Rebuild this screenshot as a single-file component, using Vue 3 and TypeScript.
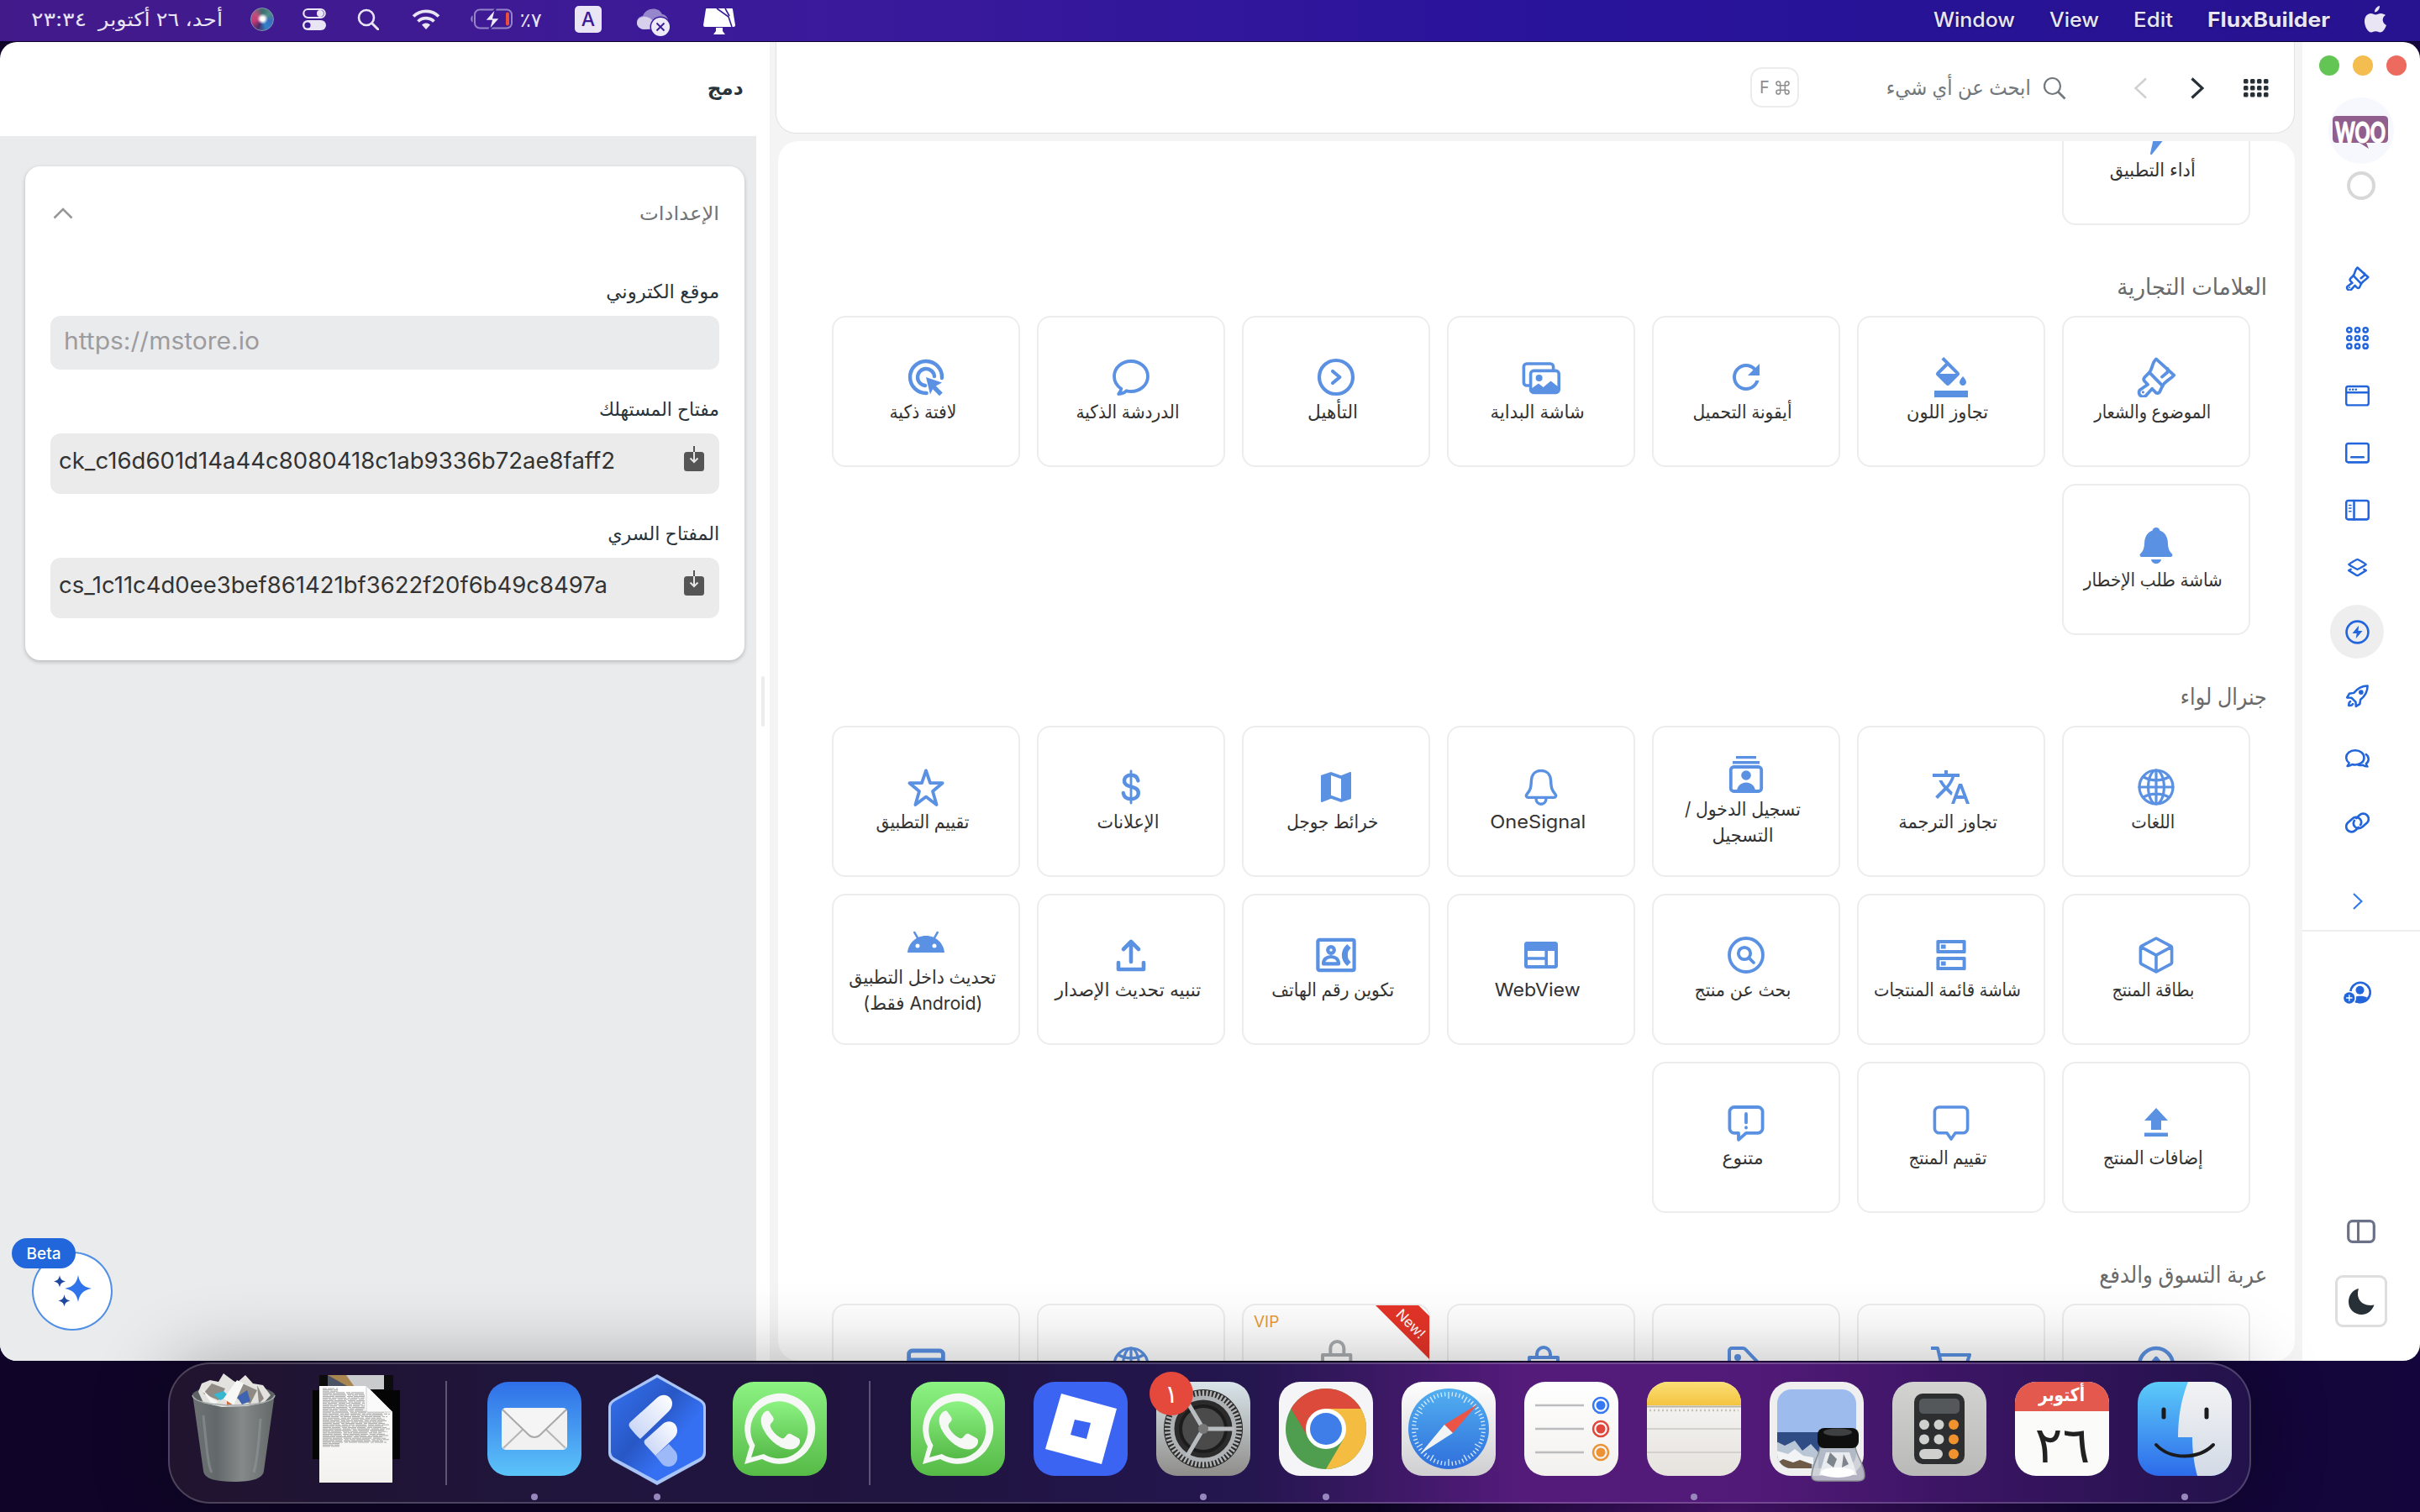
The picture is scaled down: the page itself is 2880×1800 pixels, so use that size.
<script setup lang="ts">
interface Label { text: string; w: number }
interface Tile { icon: string; lines: Label[]; vip?: boolean }
interface Section { title: Label; tiles: Tile[] }

/* Condenses or widens a single line of text to the given width in pixels. */
const vFit = {
  mounted(el: HTMLElement, binding: { value: number }) {
    const natural = el.getBoundingClientRect().width
    if (!natural) return
    const rtl = getComputedStyle(el).direction === 'rtl'
    el.style.transformOrigin = rtl ? '100% 50%' : '0 50%'
    el.style.transform = `scaleX(${binding.value / natural})`
    el.style[rtl ? 'marginLeft' : 'marginRight'] = `${binding.value - natural}px`
  },
}

const t = (icon: string, text: string, w: number, text2?: string, w2?: number): Tile => ({
  icon,
  lines: text2 ? [{ text, w }, { text: text2, w: w2 as number }] : [{ text, w }],
})

const s = (inner: string, width = 2) =>
  `<g fill="none" stroke="currentColor" stroke-width="${width}" stroke-linejoin="round" stroke-linecap="round">${inner}</g>`
const f = (d: string) => `<path fill="currentColor" fill-rule="evenodd" d="${d}"/>`

const brush = (w: number) =>
  s('<path d="M8 9.2C10 6.8 9.4 3.4 12 1.2L22.6 10.8C20.8 13.2 17.3 14.2 15.8 17.2Z"/><path d="M8 9.2 5.2 12c-.8.9-.8 1.6-.1 2.4L7 16.4 2.3 19.600a2.500 2.500 0 0 0 3.500 3.500L9.600 18.900l2 2.100c.9.8 1.700.7 2.400-.1l1.800-3.700M15.500 11.800 18.800 9v-2"/>', w) +
  '<circle cx="4.2" cy="20.900" r=".8" fill="currentColor"/>'
const globe = s('<circle cx="12" cy="12" r="10"/><ellipse cx="12" cy="12" rx="4.700" ry="10"/><path d="M2 12h20M12 2v20M4.500 6c4.500 2.600 10.500 2.600 15 0M4.500 18c4.500-2.600 10.500-2.600 15 0"/>', 1.6)

const icons: Record<string, string> = {
  boltTail: f('M11.800 8H21.800L9.300 23.600l-.9-.4z'),
  brush: brush(1.9),
  fill: f('M16.56 8.94L7.62 0 6.21 1.41l2.38 2.38-5.15 5.15c-.59.59-.59 1.54 0 2.12l5.5 5.5c.29.29.68.44 1.06.44s.77-.15 1.06-.44l5.5-5.5c.59-.58.59-1.53 0-2.12zM5.21 10L10 5.21 14.79 10H5.21zM19 11.500s-2 2.170-2 3.500c0 1.100.9 2 2 2s2-.9 2-2c0-1.330-2-3.500-2-3.500zM2 20h20v4H2z'),
  refresh: f('M17.65 6.35C16.2 4.9 14.21 4 12 4c-4.42 0-7.99 3.580-7.99 8s3.570 8 7.99 8c3.730 0 6.840-2.550 7.730-6h-2.080c-.82 2.330-3.040 4-5.650 4-3.310 0-6-2.690-6-6s2.690-6 6-6c1.660 0 3.140.69 4.220 1.780L13 11h7V4l-2.350 2.350z'),
  images: s('<path d="M4.800 17H3.500A1.800 1.800 0 0 1 1.700 15.200V5.800C1.700 4.800 2.500 4 3.500 4h14a1.800 1.800 0 0 1 1.800 1.800V8"/><rect x="5.800" y="8.200" width="16.800" height="13" rx="1.800"/>', 1.8) + '<circle cx="10.800" cy="12.500" r="2" fill="currentColor"/>' + f('M6 19l4.500-3.200 2.800 2.200 4.500-3.700 4.700 3.700v3.200H6z'),
  next: s('<circle cx="12" cy="12" r="10"/><path d="M10 8.500l4.200 3.500-4.200 3.500"/>', 2.1),
  chat: s('<path d="M12 2.500c-5.600 0-10 4-10 9 0 3.200 1.600 5.700 4.200 7.400-.2 1.200-.8 2.200-1.600 3.100 2 0 3.500-.7 4.700-1.900.9.3 1.800.4 2.700.4 5.600 0 10-4 10-9s-4.400-9-10-9z"/>', 1.9),
  target: s('<path d="M21.500 12.500A9.500 9.500 0 1 0 12.300 21.500"/><path d="M17 11.500A5 5 0 1 0 11.500 17"/>', 2.2) + f('M12 12l9.500 3.300-3.600 1.900 4 4-1.900 1.900-4-4-1.500 3.200z'),
  bellFill: f('M12 1.500c1.200 0 2 .7 2.200 1.700 2.800 1 4.500 3.600 4.700 6.600.2 4 .6 5.600 2.400 7.200.8.8.3 2-.7 2H3.400c-1 0-1.500-1.200-.7-2 1.800-1.600 2.200-3.200 2.400-7.200.2-3 1.900-5.600 4.700-6.600.2-1 1-1.700 2.200-1.700zM9 20.500h6c-.2 1.400-1.400 2.500-3 2.500s-2.800-1.100-3-2.500z'),
  globe,
  users: f('M6 1h12v1.600H6zM4 4h16v1.700H4z') + s('<rect x="2.900" y="7.500" width="18.200" height="14.500" rx="1.800"/>', 1.9) + '<circle cx="12" cy="12.500" r="2.900" fill="currentColor"/>' + f('M6.500 21.500c.5-3 2.800-4.700 5.500-4.700s5 1.700 5.500 4.700z'),
  translate: f('M12.87 15.07l-2.54-2.51.03-.03c1.74-1.940 2.980-4.170 3.710-6.530H17V4h-7V2H8v2H1v1.990h11.170C11.500 7.920 10.440 9.750 9 11.350 8.070 10.320 7.300 9.190 6.690 8h-2c.73 1.630 1.730 3.170 2.980 4.560l-5.090 5.020L4 19l5-5 3.110 3.110.76-2.040zM18.500 10h-2L12 22h2l1.120-3h4.750L21 22h2l-4.500-12zm-2.620 7l1.620-4.330L19.120 17h-3.240z'),
  bell: s('<path d="M12 2.200c-3.500 0-5.600 2.500-5.800 6-.2 4.500-.7 5.800-2.700 8.100-.6.800-.2 1.900.8 1.900h15.400c1 0 1.400-1.100.8-1.900-2-2.300-2.500-3.600-2.700-8.100-.2-3.500-2.300-6-5.800-6zM9 18.700c0 2 1.300 3.400 3 3.400s3-1.400 3-3.400"/>', 1.7),
  map: f('M20.500 3l-.16.03L15 5.100 9 3 3.360 4.900c-.21.07-.36.25-.36.48V20.500c0 .28.22.5.5.5l.16-.03L9 18.900l6 2.100 5.640-1.900c.21-.07.36-.25.36-.48V3.500c0-.28-.22-.5-.5-.5zM15 19l-6-2.110V5l6 2.110V19z'),
  dollar: s('<path d="M16.200 8.200C15.800 6 14.200 4.900 12 4.900c-2.400 0-4 1.300-4 3.400 0 4.700 8.400 2.300 8.400 7.200 0 2.200-1.800 3.600-4.400 3.600-2.600 0-4.300-1.300-4.600-3.600"/>', 2.2) + s('<path d="M12 2.500v19"/>', 1.400),
  star: s('<path d="M12 2.200l2.500 7.400h7.300l-5.800 4.900 2.300 8-6.300-4.700-6.300 4.700 2.300-8-5.800-4.900h7.300z"/>', 1.9),
  cube: s('<path d="M12 2l8.800 4.700a1 1 0 0 1 .5.9v8.800a1 1 0 0 1-.5.9L12 22l-8.800-4.700a1 1 0 0 1-.5-.9V7.600a1 1 0 0 1 .5-.9zM3 7.200l9 4.900 9-4.900M12 12.100V22"/>', 1.8),
  rows: f('M4 3h16a.8.8 0 0 1 .8.800v6.400a.8.8 0 0 1-.8.8H4a.8.8 0 0 1-.8-.8V3.800A.8.8 0 0 1 4 3zm1.200 2v4h13.600V5zM4 13h16a.8.8 0 0 1 .8.800v6.400a.8.8 0 0 1-.8.800H4a.8.8 0 0 1-.8-.8v-6.400A.8.8 0 0 1 4 13zm1.200 2v4h13.600v-4zM6 5.700h2.800v2.600H6zM6 15.700h2.800v2.600H6z'),
  find: s('<circle cx="12" cy="12" r="10"/><circle cx="11" cy="11" r="3.600"/><path d="M13.700 13.700l2.800 2.800"/>', 1.9),
  web: f('M3.500 4h17c.8 0 1.500.7 1.500 1.500v13c0 .8-.7 1.500-1.500 1.500h-17c-.8 0-1.500-.7-1.500-1.500v-13C2 4.700 2.700 4 3.500 4zM4 9.500v3.600h10.200V9.500zM4 14.900V18h10.200v-3.100zM16 9.500V18h4V9.500z'),
  contact: s('<rect x="1.200" y="2.900" width="21.600" height="18.200" rx="1"/><circle cx="9" cy="9" r="1.900"/><path d="M4.500 17.200c0-2.700 2-4.200 4.500-4.200s4.500 1.500 4.500 4.200z"/>', 2.1) + f('M18.600 5.500l2.200 2.300-1.500 1.800c-.5 1.600-.5 3.200 0 4.800l1.500 1.800-2.200 2.300c-4.200-3.600-4.200-9.400 0-13z'),
  upload: s('<path d="M12 16V4.500M7.500 8.500L12 4l4.500 4.500M4.500 16.500v4h15v-4"/>', 2.3),
  android: f('M17.600 9.480l1.840-3.180c.16-.31.04-.69-.26-.85-.29-.15-.65-.06-.83.22l-1.880 3.240c-2.860-1.210-6.080-1.210-8.940 0L5.650 5.670c-.19-.29-.58-.38-.87-.2-.28.18-.37.54-.22.83L6.400 9.480C3.300 11.250 1.280 14.440 1 18h22c-.28-3.560-2.300-6.750-5.400-8.520zM7 15.250a1.250 1.250 0 1 1 0-2.500 1.250 1.250 0 0 1 0 2.500zm10 0a1.250 1.250 0 1 1 0-2.500 1.250 1.250 0 0 1 0 2.500z'),
  publish: f('M12 3l7 7.500h-4V16H9v-5.500H5zM5 17.800h14V20H5z'),
  review: s('<path d="M5 2.500h14A2.800 2.800 0 0 1 21.800 5.300v9.800a2.800 2.800 0 0 1-2.800 2.800h-4.500L12 21.500l-2.500-3.600H5a2.800 2.800 0 0 1-2.800-2.800V5.300A2.800 2.800 0 0 1 5 2.500z"/>', 1.8),
  alert: s('<path d="M5 2.500h14A2.800 2.800 0 0 1 21.800 5.300v9.800a2.800 2.800 0 0 1-2.800 2.800h-7l-4.500 4v-4H5a2.800 2.800 0 0 1-2.800-2.800V5.300A2.800 2.800 0 0 1 5 2.500z"/><path d="M12 6.500v5.200M12 14.600v.2"/>', 1.9),
  card: s('<rect x="1.800" y="3.500" width="20.400" height="17" rx="2"/><path d="M2 9h20"/>', 2.4),
  bag: s('<path d="M5 7.500h17V22H5zM9.500 7.500V5.500a4 4 0 0 1 8 0v2"/>', 2),
  gearBag: s('<path d="M9.500 22H18.500V7.500H6v8.500M9.500 7.500V4.500a3 3 0 0 1 6 0V7.500"/>', 1.5) + '<circle cx="6.500" cy="18.700" r="2.700" fill="currentColor"/>',
  tag: s('<path d="M2 12V3.500A1.500 1.500 0 0 1 3.500 2H10a2 2 0 0 1 1.500.6l9 9.400-9 9z"/><circle cx="7" cy="7.500" r="1"/>', 2),
  cart: s('<path d="M0 2h4l3 13h13l3-9H5"/>', 2),
  ring: s('<circle cx="12" cy="12" r="10"/><path d="M12 8v8M9.500 11L12 8l2.500 3"/>', 2.2),

  navBrush: brush(2.100),
  navGrid: s([4, 12, 20].map((x) => [4, 12, 20].map((y) => `<circle cx="${x}" cy="${y}" r="2.200"/>`).join('')).join(''), 2),
  navWindow: s('<rect x="1" y="2.500" width="22" height="18.500" rx="2"/><path d="M1 8.500h22"/><path d="M4.500 5.600h.2M7.500 5.600h.2M10.500 5.600h.2"/>', 2),
  navBar: s('<rect x="1" y="2.500" width="22" height="18.500" rx="2"/><path d="M6 16h12"/>', 2.100),
  navSide: s('<rect x="1" y="2.500" width="22" height="18.500" rx="2"/><path d="M8.700 2.500V21"/>', 2.100) + s('<path d="M3.800 7h2M3.800 10h2M3.800 13h2"/>', 1.3),
  navLayers: s('<path d="M12 4c.6 0 8.500 4.600 8.500 5s-7.900 5-8.500 5-8.500-4.600-8.500-5S11.400 4 12 4zM5.500 13.800l-2 1.200 7.500 4.600c.6.4 1.400.4 2 0l7.500-4.600-2-1.200"/>', 2),
  navBolt: s('<circle cx="12" cy="12" r="10.700"/>', 2.2) + f('M13.300 5.500L7 13.200h4.300L10.500 18.500 17 10.800h-4.200z'),
  navRocket: s('<path d="M22 2c-6 0-10 2.500-13.500 7L4 9.800 1.800 13.600l4.500.3 4 4 .3 4.400L14.300 20l.8-4.500C19.500 12 22 8 22 2zM5 17.500c-1.300.8-1.600 2.700-1.500 4 1.300.1 3.300-.2 4-1.500"/>', 2.100) + '<circle cx="15.600" cy="8.400" r="2.300" fill="currentColor"/>',
  navChat: s('<path d="M9.800 3.500c-5 0-8.800 3.100-8.800 7.200 0 2.200 1.100 4 2.800 5.300-.2 1.200-.7 2-1.600 3 2 0 3.500-.7 4.600-1.600 1 .3 2 .4 3 .4 5 0 8.800-3 8.800-7.100s-3.800-7.200-8.800-7.200z"/><path d="M20.500 7.500c3.200 2.500 3.300 6.800.1 9.100.1 1.100.5 2 1.300 2.900-2 0-3.400-.6-4.500-1.500-1.500.3-3 .3-4.400 0"/>', 2.100),
  navLink: s('<path d="M13 16.500l-3 3a5.300 5.300 0 0 1-7.500-7.500l4.500-4a5.300 5.300 0 0 1 7.500.200 5 5 0 0 1 .5 6"/><path d="M11 7.500l3-3a5.300 5.300 0 0 1 7.500 7.500l-4.500 4a5.300 5.300 0 0 1-7.500-.200 5 5 0 0 1-.5-6"/>', 2.200),
}

const performance: Tile = t('boltTail', 'أداء التطبيق', 102)

const sections: Section[] = [
  {
    title: { text: 'العلامات التجارية', w: 179 },
    tiles: [
      t('brush', 'الموضوع والشعار', 139),
      t('fill', 'تجاوز اللون', 97),
      t('refresh', 'أيقونة التحميل', 118),
      t('images', 'شاشة البداية', 112),
      t('next', 'التأهيل', 60),
      t('chat', 'الدردشة الذكية', 123),
      t('target', 'لافتة ذكية', 80),
      t('bellFill', 'شاشة طلب الإخطار', 165),
    ],
  },
  {
    title: { text: 'جنرال لواء', w: 103 },
    tiles: [
      t('globe', 'اللغات', 52),
      t('translate', 'تجاوز الترجمة', 118),
      t('users', 'تسجيل الدخول /', 138, 'التسجيل', 73),
      t('bell', 'OneSignal', 114),
      t('map', 'خرائط جوجل', 109),
      t('dollar', 'الإعلانات', 74),
      t('star', 'تقييم التطبيق', 111),
      t('cube', 'بطاقة المنتج', 98),
      t('rows', 'شاشة قائمة المنتجات', 175),
      t('find', 'بحث عن منتج', 115),
      t('web', 'WebView', 102),
      t('contact', 'تكوين رقم الهاتف', 146),
      t('upload', 'تنبيه تحديث الإصدار', 174),
      t('android', 'تحديث داخل التطبيق', 175, '(Android فقط)', 142),
      t('publish', 'إضافات المنتج', 119),
      t('review', 'تقييم المنتج', 93),
      t('alert', 'متنوع', 49),
    ],
  },
  {
    title: { text: 'عربة التسوق والدفع', w: 200 },
    tiles: [
      { icon: 'ring', lines: [] },
      { icon: 'cart', lines: [] },
      { icon: 'tag', lines: [] },
      { icon: 'bag', lines: [] },
      { icon: 'gearBag', lines: [], vip: true },
      { icon: 'globe', lines: [] },
      { icon: 'card', lines: [] },
    ],
  },
]

const nav = [
  { icon: 'navBrush', h: 74 },
  { icon: 'navGrid', h: 69 },
  { icon: 'navWindow', h: 68 },
  { icon: 'navBar', h: 68 },
  { icon: 'navSide', h: 68 },
  { icon: 'navLayers', h: 68 },
  { icon: 'navBolt', h: 86, active: true },
  { icon: 'navRocket', h: 66 },
  { icon: 'navChat', h: 84 },
  { icon: 'navLink', h: 68 },
]

const whatsapp = `<rect x="0" y="0" width="112" height="112" rx="25" fill="url(#gWa)"/>
<path d="M14 98l6-21a42 42 0 1 1 15 15z" fill="#f6f8f6"/><path d="M22 90l4.500-14.500a34 34 0 1 1 10.500 10.500z" fill="url(#gWa)"/>
<path d="M43 35c-2-1-4 0-6 2-9 10 2 27 13 36 10 8 23 11 29 2 2-4 1-7-1-8l-9-5c-2-1-4 0-6 3s-4 3-7 1c-5-3-9-8-11-12-1-3 0-4 2-6s2-4 1-6z" fill="#f6f8f6"/>`

const ticks = Array.from({ length: 60 }, (_, i) => `<path d="M56 12v${i % 5 ? 5 : 8}" transform="rotate(${i * 6} 56 56)"/>`).join('')
const teeth = Array.from({ length: 60 }, (_, i) => `<path d="M56 10v7" transform="rotate(${i * 6} 56 56)"/>`).join('')
const keys = [0, 1, 2].map((r) => [0, 1, 2].map((c) => {
  const col = c === 2 ? '#f0932f' : '#d0d0cf'
  if (r === 2 && c === 1) return ''
  const w = r === 2 && c === 0 ? 28 : 12
  return `<rect x="${32 + c * 17.500}" y="${45 + r * 17.500}" width="${w}" height="12" rx="6" fill="${col}"/>`
}).join('')).join('')

/* Dense print on the document: the word gaps differ from line to line. */
const paper = Array.from({ length: 44 }, (_, i) => {
  const w = 70 + ((i * 37) % 11)
  const width = i > 40 ? 20 : i < 3 ? 18 : i < 17 ? 50 : w
  return `<path stroke-dasharray="${5 + ((i * 7) % 11)} 1 ${8 + ((i * 5) % 13)} 2 ${3 + ((i * 3) % 7)} 1" d="M16 ${8 + i * 1.600}h${width}"/>`
}).join('')

interface DockItem { art?: string; sep?: boolean; dot?: boolean; badge?: string; month?: string; day?: string }
const dock: DockItem[] = [
  {
    art: `<path d="M7 14h98L92 106c-1 9-13 13-36 13s-35-4-36-13z" fill="url(#gTrash)"/><ellipse cx="56" cy="16" rx="49" ry="12" fill="#5c6263"/>
      <path d="M14 12l4-10 10-4 10 2 6-10 12 9 4 2 10-9 9 10 12 2 9 12-8 9-20 4-30 1-22-5z" fill="#e3e2de"/>
      <path d="M30 2l16 6-8 14-18-8zM62 0l22 10-8 16-16-6zM84 4l8 16-6 6z" fill="#8f8a83"/><path d="M32 15l12-4 6 6-10 5z" fill="#37b6cf"/><path d="M60 18l12-8 4 13-10 4z" fill="#3e63b0"/><path d="M48 18l8-2-2 11-6 2z" fill="#cf6e3c"/>
      <path d="M44 20l16-22 8 4-12 26zM18 8l12 12 8 4-8 3z" fill="#f7f7f5"/>
      <path d="M7 16c2 16 96 16 98 0" fill="none" stroke="#a8adae" stroke-width="1.500"/><path d="M20 40c4 40 6 62 10 68M88 44c-2 30-4 50-8 64" stroke="#9ca1a2" stroke-width="3" fill="none" opacity=".45"/>`,
  },
  {
    art: `<path d="M12-8h88v44H12z" fill="#0c0c0c"/><path d="M22-8h67V9H22z" fill="#a9854f"/><path d="M22-8l30 17H22z" fill="#4b5365"/><path d="M44-8h45v17H56z" fill="#c9cbcc"/><path d="M4 10h104v82H4z" fill="#050505"/>
      <path d="M12 5h56l31 31v84H12z" fill="url(#gPaper)"/><g stroke="#a8a8a8" stroke-width="1" fill="none">${paper}</g><path d="M68 5l31 31H70c-2 0-2-1-2-3z" fill="#fafafa" stroke="#cfcfcf" stroke-width="1"/>`,
  },
  { sep: true },
  {
    dot: true,
    art: `<rect width="112" height="112" rx="25" fill="url(#gMail)"/><rect x="17" y="31" width="78" height="50" rx="5" fill="#f1f1f1"/>
      <path d="M19 79l25-24M93 79L68 55" stroke="#b5b5b5" stroke-width="2"/><path d="M18 33l31 30c4 4 10 4 14 0l31-30" fill="#f5f5f5" stroke="#a9a9a9" stroke-width="2"/>`,
  },
  {
    dot: true,
    art: `<path d="M56-9l51 29q7 4 7 10v55q0 6-7 10l-51 28-51-28q-7-4-7-10V30q0-6 7-10z" fill="#a9c4f7"/><path d="M56-5l50 28q5 3 5 8v52q0 5-5 8L56 118 6 91q-5-3-5-8V31q0-5 5-8z" fill="url(#gFlux)"/>
      <path d="M24 48l32-29c8-7 18-2 18 7 0 4-2 7-5 10L36 68q-4-3-12-13c-2-3-2-5 0-7z" fill="url(#gFl)"/><path d="M43 68l20-18c7-6 17-2 17 8 0 4-2 7-5 10L54 88 42 75c-2-3-2-5 1-7z" fill="url(#gFl)"/><path d="M54 88l16-14 8 9c4 6 2 14-4 17-4 2-9 1-12-2z" fill="#9db9f7"/>`,
  },
  { art: whatsapp },
  { sep: true },
  { art: whatsapp },
  { art: `<rect width="112" height="112" rx="25" fill="#3b64f2"/><path fill-rule="evenodd" fill="#fff" d="M33 14l66 18-18 66-67-18zM49 45l-5 18 19 5 5-19z"/>` },
  {
    dot: true, badge: '١',
    art: `<rect width="112" height="112" rx="25" fill="url(#gSet)"/><circle cx="56" cy="56" r="47" fill="#2b2b2b"/><g stroke="#b3b5b6" stroke-width="2.400">${teeth}</g><circle cx="56" cy="56" r="37" fill="none" stroke="#aeb2b4" stroke-width="5"/><circle cx="56" cy="56" r="28" fill="#4a4a4a"/>
      <circle cx="56" cy="56" r="27" fill="none" stroke="#1c1c1c" stroke-width="4"/><path d="M56 56h37M56 56L37 24M56 56L37 88" stroke="#b9bdbf" stroke-width="5"/><circle cx="56" cy="56" r="6" fill="#777"/>`,
  },
  {
    dot: true,
    art: `<rect width="112" height="112" rx="25" fill="#f5f4f7"/><circle cx="56" cy="56" r="48" fill="#4f9d4e"/><path d="M56 56L14.400 32a48 48 0 0 1 83.200 0z" fill="#dc4a3b"/><path d="M56 56L14.400 32 36 68z" fill="#dc4a3b"/><path d="M56 32h41.600A48 48 0 0 1 56 104l21-36z" fill="#f4bd41"/><circle cx="56" cy="56" r="24" fill="#fff"/><circle cx="56" cy="56" r="19" fill="#3f7ee8"/>`,
  },
  {
    art: `<rect width="112" height="112" rx="25" fill="url(#gSaf)"/><circle cx="56" cy="56" r="48" fill="url(#gSafB)"/><g stroke="#d7ebfb" stroke-width="1.300">${ticks}</g><path d="M90 27L51 51l10 10z" fill="#ec5545"/><path d="M22 86l29-35 10 10z" fill="#f2f3f4"/>`,
  },
  {
    art: `<rect width="112" height="112" rx="25" fill="url(#gPaper)"/><g stroke="#bcbcbe" stroke-width="2.500"><path d="M13 28h58M13 56h58M13 84h58"/></g>
      <g fill="none" stroke-width="2.500"><circle cx="91" cy="28" r="9" stroke="#3478f6"/><circle cx="91" cy="56" r="9" stroke="#e0463b"/><circle cx="91" cy="84" r="9" stroke="#ec9235"/></g><circle cx="91" cy="28" r="5.500" fill="#3478f6"/><circle cx="91" cy="56" r="5.500" fill="#e0463b"/><circle cx="91" cy="84" r="5.500" fill="#ec9235"/>`,
  },
  {
    dot: true,
    art: `<rect width="112" height="112" rx="25" fill="url(#gNote)"/><path d="M0 28V25A25 25 0 0 1 25 0h62a25 25 0 0 1 25 25v3z" fill="url(#gNoteT)"/><path d="M0 29.500h112" stroke="#b9b4a6" stroke-width="2"/><path d="M3 34h106" stroke="#c4c1bb" stroke-width="2.500" stroke-dasharray="2 3"/><path d="M0 56h112M0 84h112" stroke="#d3d1cd" stroke-width="2"/>`,
  },
  {
    art: `<rect width="112" height="112" rx="25" fill="#efeff0"/><clipPath id="cPrev"><rect x="9" y="9" width="94" height="94" rx="17"/></clipPath><g clip-path="url(#cPrev)"><path d="M0 0h112v60H0z" fill="#9dbbed"/><path d="M0 60h112v52H0z" fill="#2f4c85"/><path d="M0 74l10-2 8 4 12-6 9 12 10-8 9 10v26H0z" fill="#b9c6d6"/><path d="M8 82l14 4 8-6 10 8 12 2v8H8z" fill="#f1f3f5"/><path d="M6 98l10-6 12 4 8-3 14 5v14H6z" fill="#6d5b47"/></g>
      <path d="M60 78h42c2 12 11 20 11 34 0 4-3 6-8 6H58c-5 0-8-2-8-6 0-12 8-22 10-34z" fill="#c9ced3" fill-opacity=".85" stroke="#8a8f93" stroke-width="1.500"/><path d="M67 84h28l9 27H59z" fill="#eef1f3" opacity=".9"/><path d="M72 84l8 8-4 10-8-6zM88 86l6 12-8 4z" fill="#7d848c"/><ellipse cx="81" cy="108" rx="20" ry="6" fill="#fff"/><rect x="57" y="55" width="49" height="24" rx="8" fill="#0f0f10"/><ellipse cx="81" cy="60" rx="17" ry="4.500" fill="#3f4042"/>`,
  },
  {
    art: `<rect width="112" height="112" rx="25" fill="url(#gCalc)"/><rect x="26" y="14" width="60" height="84" rx="10" fill="#2c2e30"/><rect x="32" y="20" width="48" height="18" rx="5" fill="#55585a"/>${keys}`,
  },
  {
    month: 'أكتوبر', day: '٢٦',
    art: `<rect width="112" height="112" rx="25" fill="#fbfbfa"/><path d="M0 35V25A25 25 0 0 1 25 0h62a25 25 0 0 1 25 25v10z" fill="#e4594e"/>`,
  },
  {
    dot: true,
    art: `<clipPath id="cFind"><rect width="112" height="112" rx="25"/></clipPath><g clip-path="url(#cFind)"><path d="M0 0h112v112H0z" fill="url(#gFind)"/><path d="M60 0c-8 20-12 42-12 66h17c0 16 2 32 6 46h41V0z" fill="url(#gFindR)"/></g><path d="M31 33v9M82 33v9" stroke="#1b1b1d" stroke-width="5" stroke-linecap="round"/><path d="M22 75c17 18 50 18 68 0" fill="none" stroke="#1b1b1d" stroke-width="4" stroke-linecap="round"/>`,
  },
]
</script>

<template>
  <div class="desktop">
    <svg class="defs" width="0" height="0">
      <defs>
        <linearGradient id="gWa" x2="0" y2="1"><stop stop-color="#8cf383" /><stop offset="1" stop-color="#56ba47" /></linearGradient>
        <linearGradient id="gMail" x2="0" y2="1"><stop stop-color="#2f6fe8" /><stop offset="1" stop-color="#5cc4f9" /></linearGradient>
        <linearGradient id="gFlux" x2="1" y2=".9"><stop stop-color="#3573f2" /><stop offset=".45" stop-color="#2857c5" /><stop offset=".7" stop-color="#3570f2" /></linearGradient>
        <linearGradient id="gFl" x1="1" x2="0" y2="1"><stop stop-color="#fff" /><stop offset="1" stop-color="#c3d1f6" /></linearGradient>
        <linearGradient id="gTrash"><stop stop-color="#6d7374" /><stop offset=".3" stop-color="#63696a" /><stop offset=".6" stop-color="#85898a" /><stop offset="1" stop-color="#626768" /></linearGradient>
        <linearGradient id="gPaper" x2="0" y2="1"><stop stop-color="#fff" /><stop offset="1" stop-color="#f2f1ee" /></linearGradient>
        <linearGradient id="gSet" x2="0" y2="1"><stop stop-color="#d9e5ea" /><stop offset="1" stop-color="#8f8d8a" /></linearGradient>
        <linearGradient id="gSaf" x2="0" y2="1"><stop stop-color="#fff" /><stop offset="1" stop-color="#cfcfd2" /></linearGradient>
        <linearGradient id="gSafB" x2="0" y2="1"><stop stop-color="#52b0f0" /><stop offset="1" stop-color="#2f6edc" /></linearGradient>
        <linearGradient id="gNote" x2="0" y2="1"><stop stop-color="#f8f7f6" /><stop offset="1" stop-color="#e6e3de" /></linearGradient>
        <linearGradient id="gNoteT" x2="0" y2="1"><stop stop-color="#fbdf76" /><stop offset="1" stop-color="#f4c440" /></linearGradient>
        <linearGradient id="gCalc" x2="0" y2="1"><stop stop-color="#d3d3d2" /><stop offset="1" stop-color="#b9b9b8" /></linearGradient>
        <linearGradient id="gFind" x2="0" y2="1"><stop stop-color="#5ccbf9" /><stop offset="1" stop-color="#2d6bea" /></linearGradient>
        <linearGradient id="gFindR" x2="0" y2="1"><stop stop-color="#f3f3f4" /><stop offset="1" stop-color="#d2dae6" /></linearGradient>
      </defs>
    </svg>

    <header class="menubar">
      <div class="mb-left">
        <span class="clock" dir="rtl"><span v-fit="148" class="ar fit">أحد، ٢٦ أكتوبر</span><span v-fit="66" class="ar fit">٢٣:٣٤</span></span>
        <span class="siri"></span>
        <svg class="m-cc" viewBox="0 0 28 28" width="28" height="28"><rect x="1.300" y="2" width="25.400" height="10" rx="5" fill="none" stroke="#e9e5f5" stroke-width="2.200" /><circle cx="21" cy="7" r="4" fill="#e9e5f5" /><rect y="15" width="28" height="12" rx="6" fill="#e9e5f5" /><circle cx="6" cy="21" r="3.600" fill="#3c1a97" /></svg>
        <svg class="m-search" viewBox="0 0 26 26" width="26" height="26"><circle cx="11" cy="11" r="9" fill="none" stroke="#e9e5f5" stroke-width="2.600" /><path d="M18 18l7 7" stroke="#e9e5f5" stroke-width="3" stroke-linecap="round" /></svg>
        <svg class="m-wifi" viewBox="0 0 34 26" width="34" height="26"><g fill="none" stroke="#e9e5f5" stroke-width="3.800"><path d="M2 9.500a21.500 21.500 0 0 1 30 0" /><path d="M7.500 15.500a13.600 13.600 0 0 1 19 0" /></g><path d="M12 19.500a7.200 7.200 0 0 1 10 0L17 25z" fill="#e9e5f5" /></svg>
        <svg class="m-bat" viewBox="0 0 50 26" width="50" height="26"><rect x="5" y="1.500" width="44" height="22" rx="6" fill="none" stroke="#9484c8" stroke-width="2" /><path d="M2.500 8.500v8c-3-1-3-7 0-8z" fill="#9484c8" /><rect x="42" y="4.500" width="4" height="16" rx="2" fill="#ec4d3d" /><path d="M30 0L17 14.500h8L22 26l13-14.500h-8z" fill="#efecf8" stroke="#3c1a97" stroke-width="1.600" /></svg>
        <span v-fit="26" class="ar fit pct" dir="rtl">٧٪</span>
        <span class="input-a">A</span>
        <svg class="m-cloud" viewBox="0 0 42 36" width="42" height="36"><path d="M9 26C-1 25-2 11 8 10 11 0 27-2 31 8c8 1 10 12 3 17z" fill="#9686cb" /><path d="M9 26C-1 25-2 13 8 11c7-1 14 4 17 14z" fill="#d6d0ec" /><circle cx="29" cy="23" r="12.500" fill="#3a1a9a" /><circle cx="29" cy="23" r="11" fill="#eceaf7" /><path d="M24.500 18.500l9 9M33.500 18.500l-9 9" stroke="#3a1a9a" stroke-width="1.800" /></svg>
        <svg class="m-disp" viewBox="0 0 38 34" width="38" height="34"><path d="M4 2h30q1 0 1 1l3 19q0 2-2 2H2q-2 0-2-2L3 3q0-1 1-1z" fill="#fff" /><path d="M16 2l14 10 4 12M26 2l5 9" stroke="#3a1a9a" stroke-width="1.600" fill="none" /><path d="M15 25h8v4l3 4H12l3-4z" fill="#fff" /></svg>
      </div>
      <div class="mb-right">
        <span v-fit="97" class="fit">Window</span>
        <span v-fit="59" class="fit">View</span>
        <span v-fit="47" class="fit">Edit</span>
        <b v-fit="146" class="fit">FluxBuilder</b>
        <svg viewBox="0 0 26 32" width="26" height="32"><path d="M18 0c.2 4-3 7.500-6 7.500C11.700 4 15 .400 18 0zM25 11c-5 3-4 9.500 1 12-2 5-4.500 8.500-7.500 8.500-2 0-2.800-1.200-5.200-1.200-2.500 0-3.400 1.200-5.200 1.200C3.500 31.500 0 24 0 18.500 0 12.500 3.500 9 7.500 9c2.300 0 4 1.500 5.700 1.500S17 9 19.500 9c2 0 4.200 1 5.500 2z" fill="#e9e5f5" /></svg>
      </div>
    </header>

    <main class="window">
      <section class="inspector">
        <div class="insp-head"><span v-fit="43" class="ar fit insp-title" dir="rtl">دمج</span></div>
        <div class="insp-body">
          <div class="card">
            <div class="card-head">
              <svg viewBox="0 0 24 14" width="24" height="14"><path d="M1.500 12.500L12 2l10.500 10.500" fill="none" stroke="#979797" stroke-width="2.600" /></svg>
              <span v-fit="95" class="ar fit set-title" dir="rtl">الإعدادات</span>
            </div>
            <div class="lab l1"><span v-fit="135" class="ar fit" dir="rtl">موقع الكتروني</span></div>
            <div class="field site"><span v-fit="233" class="fit">https://mstore.io</span></div>
            <div class="lab l2"><span v-fit="143" class="ar fit" dir="rtl">مفتاح المستهلك</span></div>
            <div class="field key">
              <span v-fit="662" class="fit">ck_c16d601d14a44c8080418c1ab9336b72ae8faff2</span>
              <svg viewBox="0 0 24 30" width="24" height="30"><rect y="7" width="24" height="23" rx="3.500" fill="#555" /><path d="M12 0v7" stroke="#555" stroke-width="2" /><path d="M12 7v11M7.500 14.500L12 19l4.500-4.500" stroke="#e6e6e6" stroke-width="2" fill="none" /></svg>
            </div>
            <div class="lab l3"><span v-fit="133" class="ar fit" dir="rtl">المفتاح السري</span></div>
            <div class="field key">
              <span v-fit="653" class="fit">cs_1c11c4d0ee3bef861421bf3622f20f6b49c8497a</span>
              <svg viewBox="0 0 24 30" width="24" height="30"><rect y="7" width="24" height="23" rx="3.500" fill="#555" /><path d="M12 0v7" stroke="#555" stroke-width="2" /><path d="M12 7v11M7.500 14.500L12 19l4.500-4.500" stroke="#e6e6e6" stroke-width="2" fill="none" /></svg>
            </div>
          </div>
          <div class="ai">
            <svg viewBox="0 0 48 40" width="48" height="40"><path d="M31 1c2 10 6 14 16 16-10 2-14 6-16 16-2-10-6-14-16-16 10-2 14-6 16-16z" fill="#2f74ea" /><path d="M9 1c1 5 2.500 6.500 7 7.500-4.500 1-6 2.500-7 7-1-4.500-2.500-6-7-7C6.500 7.500 8 6 9 1zM14.500 24c1 5 2.500 6.500 7 7.500-4.500 1-6 2.500-7 7-1-4.500-2.500-6-7-7 4.500-1 6-2.500 7-7.500z" fill="#2148a0" /></svg>
            <span class="beta">Beta</span>
          </div>
        </div>
      </section>

      <div class="splitter"><i></i></div>

      <section class="center">
        <div class="toolbar">
          <span class="kbd"><span>F</span><svg viewBox="0 0 18 18" width="17" height="17"><path d="M6 6h6v6H6zM6 6H3.500A2.500 2.500 0 1 1 6 3.500zM12 6V3.500A2.500 2.500 0 1 1 14.500 6zM12 12h2.500a2.500 2.500 0 1 1-2.500 2.500zM6 12v2.500A2.500 2.500 0 1 1 3.500 12z" fill="none" stroke="#8d8d8d" stroke-width="1.600" /></svg></span>
          <span v-fit="172" class="ar fit search-text" dir="rtl">ابحث عن أي شيء</span>
          <svg class="t-search" viewBox="0 0 28 28" width="28" height="28"><circle cx="11.500" cy="11.500" r="9.500" fill="none" stroke="#71777a" stroke-width="2.200" /><path d="M18.500 18.500l8 8" stroke="#71777a" stroke-width="2.600" /></svg>
          <svg class="t-prev" viewBox="0 0 16 26" width="16" height="26"><path d="M15 1.500L2.500 13 15 24.500" fill="none" stroke="#d0d0d0" stroke-width="2.500" /></svg>
          <svg class="t-next" viewBox="0 0 16 26" width="16" height="26"><path d="M1.500 1.500L14 13 1.500 24.500" fill="none" stroke="#263036" stroke-width="3.200" /></svg>
          <svg class="t-grid" viewBox="0 0 30 22" width="30" height="22"><g fill="#263036"><template v-for="r in 3" :key="r"><rect v-for="c in 4" :key="c" :x="(c - 1) * 8" :y="(r - 1) * 8" width="5.500" height="5.500" rx="1.500" /></template></g></svg>
        </div>

        <div class="board">
          <div class="scroll">
            <div class="grid first" dir="rtl">
              <div class="tile">
                <svg viewBox="0 0 24 24" width="48" height="48" v-html="icons[performance.icon]"></svg>
                <div class="label"><div class="line"><span v-fit="performance.lines[0].w" class="ar fit">{{ performance.lines[0].text }}</span></div></div>
              </div>
            </div>
            <template v-for="sec in sections" :key="sec.title.text">
              <h2 dir="rtl"><span v-fit="sec.title.w" class="ar fit">{{ sec.title.text }}</span></h2>
              <div class="grid" dir="rtl">
                <div v-for="(tile, i) in sec.tiles" :key="i" class="tile" :class="{ pro: tile.vip }">
                  <template v-if="tile.vip">
                    <span class="vip" dir="ltr">VIP</span>
                    <span class="ribbon"><em dir="ltr">New!</em></span>
                  </template>
                  <svg viewBox="0 0 24 24" :width="tile.vip ? 64 : 48" :height="tile.vip ? 64 : 48" v-html="icons[tile.icon]"></svg>
                  <div class="label">
                    <div v-for="l in tile.lines" :key="l.text" class="line"><span v-fit="l.w" class="ar fit">{{ l.text }}</span></div>
                    <div v-if="!tile.lines.length" class="line"></div>
                  </div>
                </div>
              </div>
            </template>
          </div>
        </div>
      </section>

      <aside class="rail">
        <div class="lights"><i class="g"></i><i class="y"></i><i class="r"></i></div>
        <div class="woo">
          <svg viewBox="0 0 66 39" width="66" height="39"><path d="M5 0h56q5 0 5 5v22q0 5-5 5H40l3 7-11-7H5q-5 0-5-5V5q0-5 5-5z" fill="#915f8d" /></svg>
          <span v-fit="60" class="fit">Woo</span>
        </div>
        <div class="ring"></div>
        <nav>
          <div v-for="n in nav" :key="n.icon" class="nav-item" :style="{ height: n.h + 'px' }">
            <span class="nav-icon" :class="{ active: n.active }"><svg viewBox="0 0 24 24" width="29" height="29" v-html="icons[n.icon]"></svg></span>
          </div>
        </nav>
        <svg class="more" viewBox="0 0 12 20" width="12" height="20"><path d="M1 1l9.500 9L1 19" fill="none" stroke="#2f7cf0" stroke-width="2.200" /></svg>
        <hr />
        <svg class="user" viewBox="0 0 33 28" width="33" height="28"><circle cx="20" cy="13.500" r="11.700" fill="none" stroke="#2365da" stroke-width="2.600" /><circle cx="19.500" cy="10.800" r="5" fill="#2365da" /><path d="M12 19.500c4-2.500 12-2.500 16 0l-2 4c-4 3-8 3.500-12 2z" fill="#2365da" /><circle cx="6.800" cy="20" r="8.300" fill="#fff" /><circle cx="6.800" cy="20" r="6.700" fill="#2365da" /><path d="M6.800 16.300v7.400M3.100 20h7.400" stroke="#fff" stroke-width="1.400" /></svg>
        <svg class="panel" viewBox="0 0 34 28" width="34" height="28"><rect x="1.700" y="1.700" width="30.600" height="24.600" rx="5" fill="none" stroke="#6b7288" stroke-width="3.200" /><path d="M13.500 2v24" stroke="#6b7288" stroke-width="3" /></svg>
        <div class="moon"><svg viewBox="0 0 31 31" width="31" height="31"><path d="M12 0C8 12 16 22 30.500 19.500 28 26.500 22 31 15.500 31 7 31 0 24.500 0 16 0 8 5 1.500 12 0z" fill="#263036" /></svg></div>
      </aside>
    </main>

    <footer class="dock">
      <template v-for="(d, i) in dock" :key="i">
        <div v-if="d.sep" class="sep"><i></i></div>
        <div v-else class="app">
          <svg viewBox="0 0 112 112" width="112" height="112" overflow="visible" v-html="d.art"></svg>
          <span v-if="d.badge" class="badge ar">{{ d.badge }}</span>
          <span v-if="d.month" class="cal"><span class="mon"><span v-fit="55" class="ar fit" dir="rtl">{{ d.month }}</span></span><span class="day"><span v-fit="66" class="ar fit" dir="rtl">{{ d.day }}</span></span></span>
          <i v-if="d.dot" class="dot" :class="{ bright: i === 14 }"></i>
        </div>
      </template>
    </footer>
  </div>
</template>

<style>
html, body { margin: 0; background: #100528; }
</style>

<style scoped>
* { box-sizing: border-box; }
.desktop {
  width: 2880px; height: 1800px; overflow: hidden; direction: ltr;
  display: flex; flex-direction: column;
  font-family: Inter, "DejaVu Sans", sans-serif;
  background:
    radial-gradient(ellipse 420px 260px at 2060px 1800px, #4a1470, transparent),
    linear-gradient(90deg, #100528, #0d0322 50%, #14063c);
}
.defs { position: absolute; }
svg { display: block; flex: none; }
.ar { font-family: Inter, "DejaVu Sans", sans-serif; }
.fit { display: inline-block; white-space: nowrap; flex: none; }

.menubar {
  height: 50px; flex: none; display: flex; justify-content: space-between; align-items: flex-start;
  background: linear-gradient(90deg, #431a8a, #3a1a9b 35%, #28139b 65%, #271390);
  border-bottom: 1px solid #0c0328; color: #e9e5f5; font-size: 24px;
}
.mb-left { display: flex; align-items: center; height: 46px; padding-left: 37px; }
.clock { display: flex; gap: 14px; font-size: 23px; line-height: 44px; }
.siri { width: 28px; height: 28px; border-radius: 50%; margin-left: 33px; background: radial-gradient(circle at 52% 48%, #fff 0 12%, transparent 34%), conic-gradient(#3f6b70, #4e8f86, #3a6dc2, #2f83c9, #4a2a68, #c23a77, #c05079, #3f6b70); border: 1px solid #7c97a8; }
.m-cc { margin-left: 34px; }
.m-search { margin-left: 37px; }
.m-wifi { margin-left: 39px; }
.m-bat { margin-left: 36px; margin-right: 9px; }
.pct { font-size: 24px; }
.input-a { margin-left: 39px; width: 32px; height: 32px; border-radius: 5px; background: #e9e5f5; color: #3b1a98; text-align: center; line-height: 32px; font-size: 23px; font-weight: 500; }
.m-cloud { margin-left: 41px; margin-top: 8px; }
.m-disp { margin-left: 38px; margin-top: 4px; }
.mb-right { display: flex; align-items: center; gap: 41px; height: 46px; padding-right: 40px; font-weight: 500; text-shadow: 0 1px 3px rgba(0, 0, 0, .4); }

.window { height: 1570px; flex: none; display: flex; background: #fff; border-radius: 20px; overflow: hidden; }

.inspector { width: 900px; display: flex; flex-direction: column; }
.insp-head { height: 112px; flex: none; display: flex; align-items: center; justify-content: flex-end; padding: 0 15px 3px 0; }
.insp-title { font-size: 23px; font-weight: 700; color: #29343a; }
.insp-body { flex: 1; background: #eaebed; padding: 36px 14px 0 30px; position: relative; }
.card { height: 588px; background: #fff; border-radius: 18px; padding: 0 30px; box-shadow: 0 2px 5px rgba(0, 0, 0, .22); display: flex; flex-direction: column; }
.card-head { height: 112px; display: flex; justify-content: space-between; align-items: center; padding-left: 3px; color: #747474; font-size: 23px; }
.lab { display: flex; justify-content: flex-end; align-items: center; font-size: 23px; color: #29343a; flex: none; }
.l1 { height: 66px; padding-top: 7px; }
.l2 { height: 76px; padding-top: 17px; }
.l3 { height: 76px; padding-top: 17px; }
.field { border-radius: 12px; display: flex; align-items: center; justify-content: space-between; flex: none; }
.site { height: 64px; background: #eaebed; padding: 0 16px 5px; font-size: 28px; color: #9c9c9e; }
.key { height: 72px; background: #ebebeb; padding: 0 18px 7px 10px; font-size: 27px; color: #333; }
.key svg { margin-top: -5px; }
.ai { position: absolute; left: 38px; top: 1328px; width: 96px; height: 94px; border-radius: 50%; background: #fff; border: 2px solid #4f8fe6; display: flex; align-items: center; justify-content: center; }
.beta { position: absolute; left: -26px; top: -18px; width: 76px; height: 36px; border-radius: 18px; background: #2166da; color: #fff; font-size: 19px; font-weight: 500; line-height: 38px; text-align: center; }

.splitter { width: 16px; padding: 755px 0 0 6px; }
.splitter i { display: block; width: 4px; height: 60px; background: #ececec; border-radius: 2px; }

.center { width: 1824px; background: #f4f4f4; padding: 0 9px 0 7px; display: flex; flex-direction: column; }
.toolbar { height: 109px; flex: none; background: #fff; border-radius: 0 0 24px 24px; border: 1px solid #e2e2e2; border-top: 0; display: flex; align-items: center; padding-left: 1159px; }
.kbd { width: 58px; height: 48px; flex: none; margin-right: 104px; border: 2px solid #ececec; border-radius: 14px; display: flex; align-items: center; justify-content: center; gap: 7px; font-size: 20px; color: #8d8d8d; }
.search-text { font-size: 25px; color: #71777a; }
.toolbar > svg { margin-top: 2px; }
.t-search { margin-left: 14px; }
.t-prev { margin-left: 80px; }
.t-next { margin-left: 52px; }
.t-grid { margin-left: 47px; }
.board { margin: 9px 0 0 3px; flex: 1; background: #fff; border-radius: 24px; overflow: hidden; position: relative; }
.scroll { padding-left: 64px; margin-top: -80px; width: 1752px; }
h2 { margin: 0 -20px 0 0; height: 108px; padding-top: 39px; display: flex; align-items: center; justify-content: flex-start; font-size: 27px; font-weight: 400; color: #6a6a6a; }
.grid { display: grid; grid-template-columns: repeat(7, 224px); gap: 20px; width: 1688px; }
.tile { height: 180px; border: 2px solid #ededed; border-radius: 16px; display: flex; flex-direction: column; align-items: center; justify-content: center; color: #5a91e3; position: relative; }
.label { margin-top: 3px; padding-right: 8px; width: 100%; }
.line { height: 31px; padding-bottom: 3px; display: flex; justify-content: center; align-items: center; font-size: 22px; color: #333; }
.pro { color: #aaadb0; }
.vip { position: absolute; left: 12px; top: 8px; font-size: 19px; line-height: 24px; color: #ea9a35; }
.ribbon { position: absolute; right: -1px; top: 0; width: 64px; height: 64px; background: #e53428; clip-path: polygon(0 0, 80% 0, 100% 20%, 100% 100%); }
.ribbon em { position: absolute; left: 14px; top: 12px; width: 56px; text-align: center; font-style: normal; font-size: 17px; line-height: 20px; color: #fff; transform: rotate(45deg); }

.rail { width: 140px; display: flex; flex-direction: column; align-items: center; }
.lights { display: flex; gap: 16px; padding-top: 16px; padding-left: 4px; }
.lights i { width: 24px; height: 24px; border-radius: 50%; }
.g { background: #62c554; } .y { background: #f4bd4f; } .r { background: #ed6a5e; }
.woo { margin-top: 26px; width: 78px; height: 79px; border-radius: 50%; background: #f6f8fd; display: flex; justify-content: center; align-items: center; position: relative; }
.woo svg { margin: 4px 2px 0 0; }
.woo span { position: absolute; left: 8px; top: 23px; font-family: Lato, sans-serif; font-weight: 900; font-size: 35px; line-height: 34px; color: #fff; text-transform: uppercase; -webkit-text-stroke: 1px #fff; }
.ring { margin-top: 9px; width: 34px; height: 34px; flex: none; border: 4px solid #d8d8d8; border-radius: 50%; }
nav { margin-top: 56px; margin-right: 10px; color: #2365da; }
.nav-item { display: flex; align-items: center; justify-content: center; }
.nav-icon { width: 64px; height: 64px; border-radius: 50%; display: flex; align-items: center; justify-content: center; }
.active { background: #eeeeee; }
.more { margin-top: 50px; margin-right: 8px; }
hr { width: 100%; height: 2px; border: 0; background: #ededed; margin: 24px 0 0; flex: none; }
.user { margin-top: 59px; margin-right: 10px; }
.panel { margin-top: 256px; }
.moon { margin-top: 38px; width: 62px; height: 62px; flex: none; border: 3px solid #dedede; border-radius: 9px; display: flex; align-items: center; justify-content: center; }

.dock {
  margin: 2px 0 0 200px; width: 2479px; height: 168px; flex: none; border-radius: 50px; padding: 0 3px;
  border: 2px solid rgba(255, 255, 255, .2); display: flex; position: relative;
  background: linear-gradient(90deg, #20142f, #20153d 20%, #201440 36%, #24164f 52%, #541b7b 65%, #521a78 76%, #3b1564 86%, #22124a);
  box-shadow: 0 0 90px rgba(0, 0, 0, .3);
}
.app { width: 146px; display: flex; justify-content: center; padding-top: 21px; position: relative; flex: none; }
.sep { width: 66px; display: flex; justify-content: center; padding: 20px 0 0 2px; flex: none; }
.sep i { width: 2px; height: 124px; background: rgba(255, 255, 255, .28); }
.dot { position: absolute; left: 69px; top: 154px; width: 8px; height: 8px; border-radius: 50%; background: #9787bd; }
.bright { background: #c58af0; }
.badge { position: absolute; left: 9px; top: 9px; width: 52px; height: 52px; border-radius: 50%; background: #e5493c; color: #fff; font-size: 30px; line-height: 52px; text-align: center; }
.cal { position: absolute; left: 17px; top: 21px; width: 112px; height: 112px; display: flex; flex-direction: column; align-items: center; }
.mon { color: #fff; font-size: 22px; font-weight: 700; line-height: 30px; height: 37px; }
.day { color: #222; font-size: 60px; line-height: 74px; }
</style>
